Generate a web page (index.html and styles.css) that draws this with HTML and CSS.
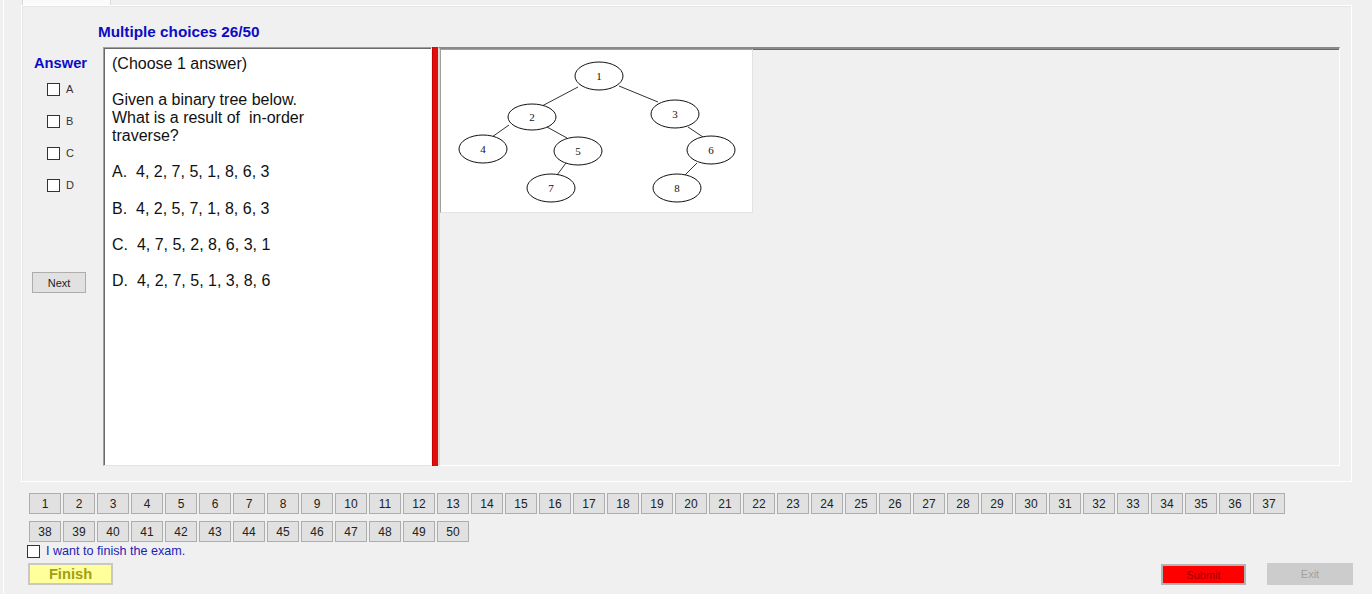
FILE: index.html
```html
<!DOCTYPE html>
<html>
<head>
<meta charset="utf-8">
<link rel="stylesheet" href="styles.css">
</head>
<body>
<div class="window">
  <div class="tabs"><div class="tab"></div></div>
  <div class="group">
    <div class="title">Multiple choices 26/50</div>
    <div class="content">
      <div class="answer">
        <div class="answer-label">Answer</div>
        <div class="choices">
          <label class="choice"><span class="box"></span><span class="letter">A</span></label>
          <label class="choice"><span class="box"></span><span class="letter">B</span></label>
          <label class="choice"><span class="box"></span><span class="letter">C</span></label>
          <label class="choice"><span class="box"></span><span class="letter">D</span></label>
        </div>
        <button class="next">Next</button>
      </div>
      <div class="question">
        <p>(Choose 1 answer)</p>
        <p>Given a binary tree below.<br>What is a result of  in-order<br>traverse?</p>
        <p>A.  4, 2, 7, 5, 1, 8, 6, 3</p>
        <p>B.  4, 2, 5, 7, 1, 8, 6, 3</p>
        <p>C.  4, 7, 5, 2, 8, 6, 3, 1</p>
        <p>D.  4, 2, 7, 5, 1, 3, 8, 6</p>
      </div>
      <div class="splitter"></div>
      <div class="picture-panel">
        <div class="picture">
          <svg width="311" height="162" viewBox="0 0 311 162">
            <g stroke="#333" stroke-width="1">
              <line x1="137" y1="37" x2="101" y2="56"/>
              <line x1="178" y1="36" x2="217" y2="52"/>
              <line x1="68" y1="75" x2="51" y2="87"/>
              <line x1="106" y1="77" x2="126" y2="88"/>
              <line x1="125" y1="113" x2="116" y2="125"/>
              <line x1="247" y1="77" x2="262" y2="87"/>
              <line x1="256" y1="113" x2="244" y2="125"/>
            </g>
            <g fill="#fff" stroke="#111" stroke-width="1">
              <ellipse cx="158" cy="26" rx="24" ry="14"/>
              <ellipse cx="91" cy="67" rx="24" ry="13"/>
              <ellipse cx="234" cy="64" rx="24" ry="14"/>
              <ellipse cx="42" cy="99" rx="24" ry="14"/>
              <ellipse cx="137" cy="101" rx="24" ry="14"/>
              <ellipse cx="270" cy="100" rx="24" ry="14"/>
              <ellipse cx="110" cy="138" rx="24" ry="14"/>
              <ellipse cx="236" cy="138" rx="24" ry="14"/>
            </g>
            <g class="node-text" text-anchor="middle">
              <text x="158" y="30">1</text>
              <text x="91" y="71">2</text>
              <text x="234" y="68">3</text>
              <text x="42" y="103">4</text>
              <text x="137" y="105">5</text>
              <text x="270" y="104">6</text>
              <text x="110" y="142">7</text>
              <text x="236" y="142">8</text>
            </g>
          </svg>
        </div>
      </div>
    </div>
  </div>
  <div class="numbers">
    <button class="num">1</button><button class="num">2</button><button class="num">3</button><button class="num">4</button><button class="num">5</button><button class="num">6</button><button class="num">7</button><button class="num">8</button><button class="num">9</button><button class="num">10</button>
    <button class="num">11</button><button class="num">12</button><button class="num">13</button><button class="num">14</button><button class="num">15</button><button class="num">16</button><button class="num">17</button><button class="num">18</button><button class="num">19</button><button class="num">20</button>
    <button class="num">21</button><button class="num">22</button><button class="num">23</button><button class="num">24</button><button class="num">25</button><button class="num">26</button><button class="num">27</button><button class="num">28</button><button class="num">29</button><button class="num">30</button>
    <button class="num">31</button><button class="num">32</button><button class="num">33</button><button class="num">34</button><button class="num">35</button><button class="num">36</button><button class="num">37</button><button class="num">38</button><button class="num">39</button><button class="num">40</button>
    <button class="num">41</button><button class="num">42</button><button class="num">43</button><button class="num">44</button><button class="num">45</button><button class="num">46</button><button class="num">47</button><button class="num">48</button><button class="num">49</button><button class="num">50</button>
  </div>
  <label class="finish-check"><span class="box"></span><span class="finish-text">I want to finish the exam.</span></label>
  <div class="actions">
    <button class="finish">Finish</button>
    <div class="right-actions">
      <button class="submit">Submit</button>
      <button class="exit">Exit</button>
    </div>
  </div>
</div>
</body>
</html>
```
FILE: styles.css
```css
* { box-sizing: border-box; }
html, body {
  margin: 0;
  padding: 0;
  background: #f0f0f0;
  font-family: "Liberation Sans", Arial, sans-serif;
  overflow: hidden;
}
.window {
  width: 1369px;
  height: 594px;
  margin-left: 3px;
  border-left: 1px solid #fff;
  display: flex;
  flex-direction: column;
}
.tabs {
  height: 5px;
  padding-left: 18px;
}
.tab {
  width: 89px;
  height: 5px;
  background: #fbfbfb;
  border-left: 1px solid #dadada;
  border-right: 1px solid #dadada;
}
.group {
  margin-left: 17px;
  width: 1331px;
  height: 477px;
  border: 1px solid #fff;
  box-shadow: inset 1px 1px 0 #e6e6e6;
  padding-right: 11px;
}
.title {
  margin-top: 18px;
  margin-left: 76px;
  height: 16px;
  line-height: 16px;
  font-size: 15.3px;
  font-weight: bold;
  color: #0c0cc4;
}
.content {
  margin-top: 7px;
  height: 419px;
  display: flex;
}
.answer {
  width: 81px;
  flex: none;
  display: flex;
  flex-direction: column;
}
.answer-label {
  margin-top: 8px;
  margin-left: 12px;
  height: 16px;
  line-height: 16px;
  font-size: 14.7px;
  font-weight: bold;
  color: #0c0cc4;
}
.choices {
  margin-top: 12px;
  margin-left: 25px;
  display: flex;
  flex-direction: column;
}
.choice {
  height: 32px;
  display: flex;
  align-items: flex-start;
  gap: 6px;
}
.box {
  width: 13px;
  height: 13px;
  border: 1px solid #333;
  background: #fff;
  flex: none;
}
.letter {
  font-size: 11px;
  line-height: 12px;
  color: #333;
}
.next {
  margin-top: 61px;
  margin-left: 10px;
  width: 54px;
  height: 21px;
  padding: 0;
  background: #e1e1e1;
  border: 1px solid #adadad;
  font-family: "Liberation Sans", Arial, sans-serif;
  font-size: 11px;
  color: #222;
}
.question {
  width: 329px;
  flex: none;
  background: #fff;
  border-top: 1px solid #a0a0a0;
  border-left: 1px solid #a0a0a0;
  border-right: 1px solid #f4f4f4;
  border-bottom: 1px solid #e3e3e3;
  box-shadow: inset 1px 1px 0 #6a6a6a;
  padding: 7px 6px 0 8px;
  font-size: 16px;
  line-height: 18px;
  color: #111;
}
.question p {
  margin: 0 0 18.2px 0;
  white-space: pre-wrap;
}
.splitter {
  width: 6px;
  flex: none;
  background: #dd1010;
  border-left: 1px solid #c00;
}
.picture-panel {
  flex: 1;
  border-top: 2px solid #8a8a8a;
  border-left: 2px solid #d8d8d8;
  border-right: 1px solid #fff;
  border-bottom: 1px solid #fff;
  box-shadow: inset 0 1px 0 #6a6a6a;
}
.picture {
  width: 313px;
  height: 164px;
  background: #fff;
  border-top: 1px solid #a0a0a0;
  border-left: 1px solid #a0a0a0;
  border-right: 1px solid #e3e3e3;
  border-bottom: 1px solid #e3e3e3;
}
.picture svg { display: block; }
.node-text {
  font-family: "Liberation Serif", "Times New Roman", serif;
  font-size: 11px;
  fill: #111;
}
.numbers {
  margin-top: 11px;
  margin-left: 25px;
  width: 1260px;
  display: flex;
  flex-wrap: wrap;
  column-gap: 2px;
  row-gap: 7px;
}
.num {
  width: 32px;
  height: 21px;
  padding: 0;
  background: #e1e1e1;
  border: 1px solid #adadad;
  font-family: "Liberation Sans", Arial, sans-serif;
  font-size: 12px;
  color: #222;
}
.finish-check {
  margin-top: 2px;
  margin-left: 23px;
  height: 14px;
  display: flex;
  align-items: center;
  gap: 6px;
}
.finish-text {
  font-size: 12.6px;
  color: #2222b8;
  line-height: 14px;
}
.actions {
  margin-top: 5px;
  margin-left: 24px;
  width: 1325px;
  display: flex;
  justify-content: space-between;
  align-items: flex-start;
}
.finish {
  width: 85px;
  height: 22px;
  padding: 0;
  background: #ffff9c;
  border: 2px solid #c8c8c8;
  font-family: "Liberation Sans", Arial, sans-serif;
  font-size: 14.7px;
  font-weight: bold;
  color: #a0a010;
}
.right-actions {
  display: flex;
  gap: 21px;
  align-items: flex-start;
}
.submit {
  margin-top: 1px;
  width: 85px;
  height: 21px;
  padding: 0;
  background: #ff0000;
  border: 2px solid #b4b4b4;
  font-family: "Liberation Sans", Arial, sans-serif;
  font-size: 11px;
  color: #a00000;
}
.exit {
  width: 86px;
  height: 22px;
  padding: 0;
  background: #cccccc;
  border: 1px solid #cccccc;
  font-family: "Liberation Sans", Arial, sans-serif;
  font-size: 11px;
  color: #a0a0a0;
}
```
